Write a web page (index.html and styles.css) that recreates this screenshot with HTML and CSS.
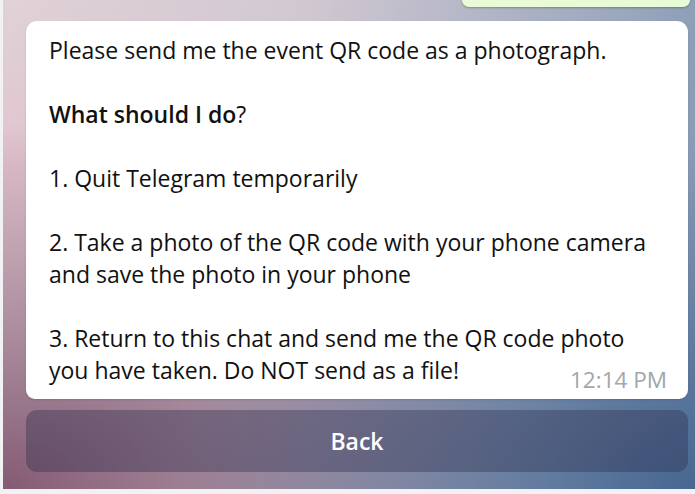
FILE: index.html
```html
<!DOCTYPE html>
<html>
<head>
<meta charset="utf-8">
<link rel="stylesheet" href="styles.css">
</head>
<body>
<div class="chat">
  <div class="out-bubble"></div>
  <div class="bubble">
    <p>Please send me the event QR code as a photograph.</p>
    <p><b>What should I do</b>?</p>
    <p>1. Quit Telegram temporarily</p>
    <p>2. Take a photo of the QR code with your phone camera and save the photo in your phone</p>
    <p><span>3. Return to this chat and send me the QR code photo </span><span>you have taken. Do NOT send as a file!</span><span class="time">12:14 PM</span></p>
  </div>
  <button class="back">Back</button>
</div>
</body>
</html>
```

FILE: styles.css
```css
html, body {
  margin: 0;
  padding: 0;
  background: #f2f1f3;
}
body {
  width: 695px;
  height: 494px;
  overflow: hidden;
  font-family: "Open Sans", "DejaVu Sans", sans-serif;
}
.chat {
  margin-left: 3px;
  height: 489px;
  box-sizing: border-box;
  padding: 0 7px 0 23px;
  display: flex;
  flex-direction: column;
  background:
    radial-gradient(ellipse 75% 70% at 100% 100%, rgba(62, 96, 140, 0.85), rgba(62, 96, 140, 0) 100%),
    radial-gradient(ellipse 80% 75% at 0% 100%, rgba(128, 84, 110, 0.95), rgba(128, 84, 110, 0) 100%),
    radial-gradient(ellipse 55% 45% at 0% 35%, rgba(226, 192, 204, 0.8), rgba(226, 192, 204, 0) 100%),
    linear-gradient(100deg, #e0d6da 0%, #d0c7d1 40%, #94a3bb 85%, #7e92b0 100%);
}
.out-bubble {
  align-self: flex-end;
  width: 228px;
  height: 7px;
  margin-right: -2px;
  background: #e9fbd6;
  border-radius: 0 0 8px 8px;
  box-shadow: 0 1px 2px rgba(60, 90, 60, 0.45);
}
.bubble {
  margin-top: 14px;
  background: #fff;
  border-radius: 11px 11px 9px 9px;
  padding: 13px 21px 13px 23px;
  color: #111;
  font-size: 23px;
  line-height: 32px;
  box-shadow: 0 1px 2px rgba(60, 60, 80, 0.2);
}
.bubble p {
  margin: 0 0 32px;
}
.bubble p:last-child {
  margin-bottom: 0;
}
.bubble b {
  font-weight: 600;
}
.time {
  float: right;
  margin-top: 14px;
  margin-bottom: -6px;
  margin-left: 10px;
  font-size: 22.5px;
  line-height: 24px;
  color: #a2a6aa;
}
.back {
  margin-top: 11px;
  height: 62px;
  border: none;
  border-radius: 11px;
  background: rgba(45, 45, 75, 0.38);
  color: #fff;
  font-family: "Open Sans", "DejaVu Sans", sans-serif;
  font-size: 23px;
  font-weight: 600;
  padding: 0;
}
```
